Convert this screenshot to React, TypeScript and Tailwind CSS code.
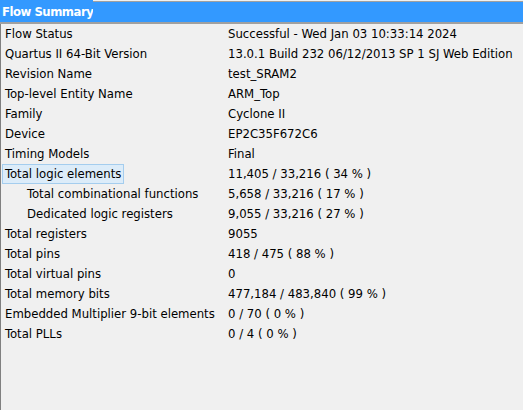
import React from "react";

const rows: [string, string, boolean?][] = [
  ["Flow Status", "Successful - Wed Jan 03 10:33:14 2024"],
  ["Quartus II 64-Bit Version", "13.0.1 Build 232 06/12/2013 SP 1 SJ Web Edition"],
  ["Revision Name", "test_SRAM2"],
  ["Top-level Entity Name", "ARM_Top"],
  ["Family", "Cyclone II"],
  ["Device", "EP2C35F672C6"],
  ["Timing Models", "Final"],
  ["Total logic elements", "11,405 / 33,216 ( 34 % )"],
  ["Total combinational functions", "5,658 / 33,216 ( 17 % )", true],
  ["Dedicated logic registers", "9,055 / 33,216 ( 27 % )", true],
  ["Total registers", "9055"],
  ["Total pins", "418 / 475 ( 88 % )"],
  ["Total virtual pins", "0"],
  ["Total memory bits", "477,184 / 483,840 ( 99 % )"],
  ["Embedded Multiplier 9-bit elements", "0 / 70 ( 0 % )"],
  ["Total PLLs", "0 / 4 ( 0 % )"],
];

export default function App() {
  return (
    <div
      className="w-[523px] h-[410px] bg-[#f0f0f0] flex flex-col overflow-hidden text-[13px] text-black"
      style={{ fontFamily: "Tahoma, 'DejaVu Sans Condensed', 'DejaVu Sans', sans-serif" }}
    >
      <div className="flex h-[22px] shrink-0">
        <div className="w-[93px] shrink-0 bg-[#3399ff] text-white font-bold pl-[2px] pt-[1px] leading-[21px] whitespace-nowrap tracking-[-0.5px]">
          Flow Summary
        </div>
        <div className="flex-1 flex flex-col">
          <div className="h-[1px] bg-[#f0f0f0]" />
          <div className="h-[1px] bg-[#a0a0a0]" />
          <div className="flex-1 bg-[#3399ff]" />
        </div>
      </div>
      <div className="h-[2px] bg-[#a0a0a0] shrink-0" />
      <div className="flex-1 border-l border-[#808080]">
        {rows.map(([k, v, indent], i) => (
          <div key={i} className="flex h-[20px] items-center">
            <div className={"w-[227px] shrink-0 whitespace-nowrap " + (indent ? "pl-[23px]" : "pl-[1px]")}>
              {i === 7 ? (
                <span className="inline-block h-[20px] leading-[18px] px-[2px] bg-[#dcecf9] border border-[#a4cdee]">{k}</span>
              ) : (
                <span className="px-[3px]">{k}</span>
              )}
            </div>
            <div className="whitespace-nowrap">{v}</div>
          </div>
        ))}
      </div>
    </div>
  );
}
